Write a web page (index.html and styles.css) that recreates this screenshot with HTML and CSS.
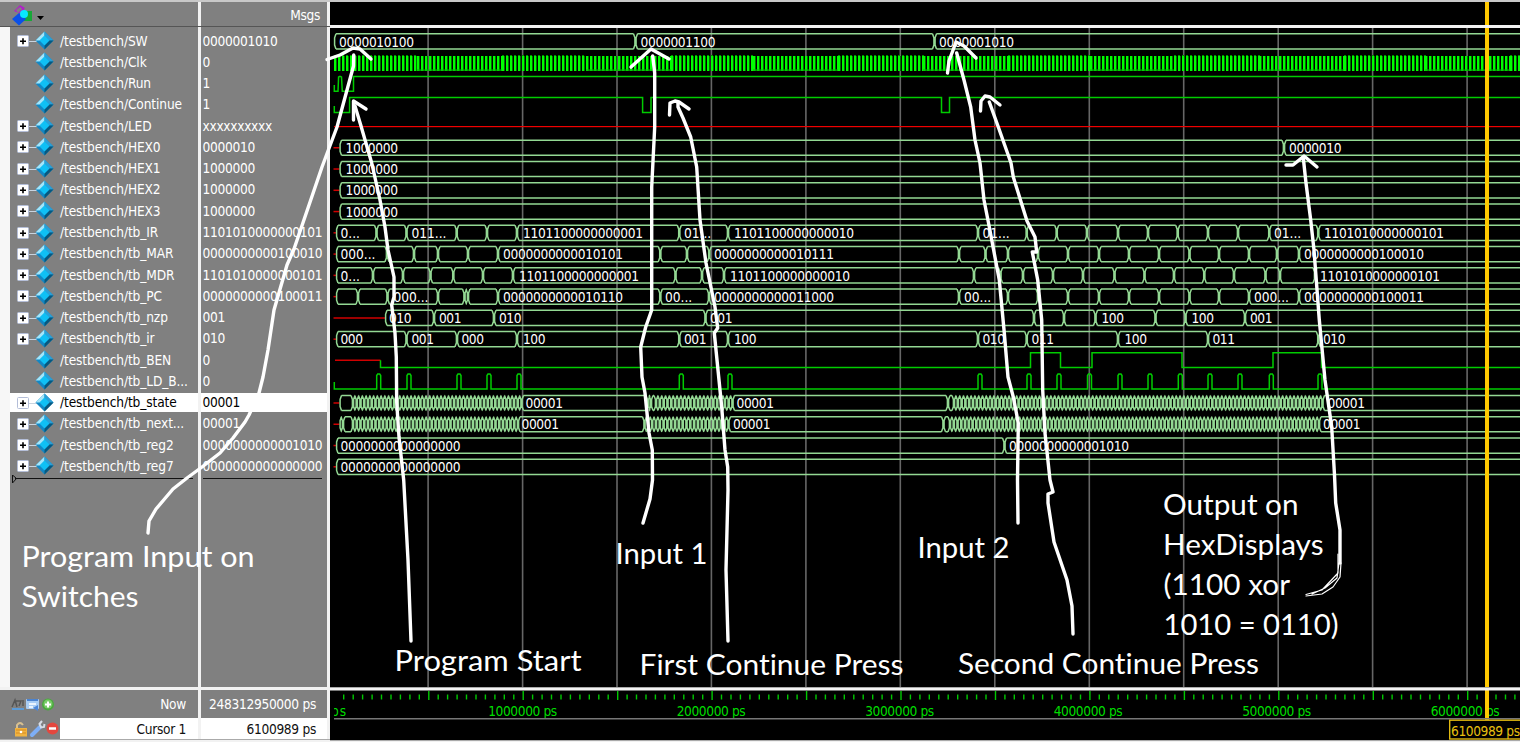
FILE: index.html
```html
<!DOCTYPE html>
<html lang="en">
<head>
<meta charset="utf-8">
<title>Wave</title>
<link rel="stylesheet" href="styles.css">
</head>
<body>
<div class="app">
  <aside class="panel">
    <div class="head">
      <div class="cell head-tools">
        <svg width="34" height="22" viewBox="0 0 34 22"><path d="M2 6 8 0 13 3 9 9Z" fill="#b020c8"/><path d="M4 5 8 2 10 4 6 8Z" fill="#808080"/><path d="M14 6H20V16H9V12H14Z" fill="#18a838"/><path d="M7 8 14 14 7 20.500 0 14Z" fill="#0a50e8"/><circle cx="12" cy="9" r="4" fill="#08e8ff"/><path d="M25 11H32L28.500 15Z" fill="#000"/></svg>
      </div>
      <div class="cell head-msgs">Msgs</div>
    </div>
    <div class="body">
      <div class="gutter"></div>
      <div class="names" id="names"></div>
      <div class="values" id="values"></div>
    </div>
    <div class="foot">
      <div class="cell now-name">
        <svg width="46" height="16" viewBox="0 0 46 16"><path d="M1 11 4 4 6 11M5 5H10L8 10M12 4V10" stroke="#555" stroke-width="1.500" fill="none"/><path d="M1 13H13" stroke="#5b9bd8" stroke-width="2"/><rect x="15" y="3" width="13" height="10" rx="1" fill="#a9cdf4"/><path d="M16 4H27" stroke="#4b83d0" stroke-width="2"/><path d="M18 8H25M18 11H22" stroke="#fff" stroke-width="1.500"/><path d="M22 12 27 9V15Z" fill="#4c86d8"/><circle cx="37" cy="8.500" r="6" fill="#4aa83e"/><circle cx="37" cy="8" r="4.500" fill="#79cc68"/><path d="M37 5.500V11.500M34 8.500H40" stroke="#fff" stroke-width="2"/></svg>
        <span>Now</span>
      </div>
      <div class="cell now-value">248312950000 ps</div>
      <div class="cell cur-name">
        <svg width="50" height="18" viewBox="0 0 50 18"><path d="M7 8V5Q10 1 13 5" fill="none" stroke="#d8c090" stroke-width="2"/><rect x="5" y="8" width="12" height="8.500" fill="#f1b340"/><path d="M6 10H16M6 13H16" stroke="#d88b20"/><circle cx="11" cy="12" r="1.300" fill="#fff"/><path d="M22 15 30 7" stroke="#7eaef5" stroke-width="4" stroke-linecap="round"/><path d="M32 1 29.500 4 31 7.500 34 7 34.500 4" stroke="#d7dde6" stroke-width="2" fill="none"/><circle cx="42.500" cy="8.500" r="6" fill="#e4473e"/><path d="M39 8.500H46" stroke="#fff" stroke-width="2.500"/></svg>
        <span>Cursor 1</span>
      </div>
      <div class="cell cur-value">6100989 ps</div>
    </div>
  </aside>
  <main class="wave"><svg id="wave" width="1190" height="742" viewBox="330 0 1190 742"></svg></main>
</div>
<svg class="notes" id="notes" width="1520" height="742" viewBox="0 0 1520 742"></svg>
<script src="wave.js"></script>
</body>
</html>
```
FILE: styles.css
```css
* { box-sizing: border-box; }
body {
  margin: 0;
  width: 1520px;
  height: 742px;
  overflow: hidden;
  position: relative;
  background: #f2f2f2;
  font-family: "DejaVu Sans Condensed", "DejaVu Sans", sans-serif;
  font-stretch: condensed;
  font-size: 13.600px;
}
.app { display: flex; height: 742px; }
.panel { width: 330px; flex: none; display: flex; flex-direction: column; color: #fff; }
.head, .foot { display: grid; grid-template-columns: 198px 126px; column-gap: 3px; }
.head { border-top: 2px solid #c8c8c8; height: 25px; }
.cell { background: #808080; }
.head-tools { padding: 3px 0 0 12px; }
.head-tools svg { display: block; }
.head-msgs { text-align: right; padding: 5px 7px 0 0; line-height: 16px; letter-spacing: -0.300px; }
.body {
  margin-top: 1px;
  height: 661px;
  display: grid;
  grid-template-columns: 10px 188px 126px;
  border-top: 1px solid #555;
}
.gutter { background: #f7f7f7; }
.names, .values { background: #808080; padding-top: 3px; overflow: hidden; }
.values { margin-left: 3px; width: 126px; }
.row { display: flex; align-items: center; height: 21.270px; white-space: nowrap; }
.row.sel { background: #fff; color: #000; margin: 1px 0; height: 19.270px; }
.row .icon { width: 50px; height: 19px; flex: none; }
.name { letter-spacing: -0.120px; }
.value { padding-left: 1.500px; letter-spacing: -0.290px; }
.end { height: 8px; display: block; margin-top: -2px; }
.foot { margin-top: 3px; grid-template-rows: 28px 21px; border-bottom: 1px solid #aaa; letter-spacing: -0.290px; }
.now-name, .cur-name { display: flex; align-items: center; justify-content: space-between; padding: 0 12px 0 11px; }
.now-value, .cur-value { text-align: right; line-height: 29px; padding-right: 11px; }
.cur-name { background: linear-gradient(90deg, #808080 60px, #fff 60px); color: #111; padding-left: 10px; }
.cur-value { background: #fff; color: #111; line-height: 23px; }
.wave { flex: none; width: 1190px; background: #000; }
.wave svg { display: block; }
.notes { position: absolute; left: 0; top: 0; }
.bus { fill: none; stroke: #93d893; stroke-width: 1.500; }
.bit { fill: none; stroke: #00cc00; stroke-width: 1.500; }
.unk { fill: none; stroke: #d00000; stroke-width: 1.500; }
.val { fill: #fff; }
.tick { fill: #00c800; }
.scale { fill: #00dd00; }
.pen { fill: none; stroke: #fff; stroke-width: 3.400; stroke-linejoin: round; stroke-linecap: round; }
.pen.thin { stroke-width: 1.200; }
.note { fill: #fff; font-family: Lato, sans-serif; font-size: 28.600px; font-variant-ligatures: none; }
.cursor-text { fill: #e8c010; }
```
FILE: wave.js
```js
const signals = [
  ['SW', '0000001010', 1], ['Clk', '0', 0], ['Run', '1', 0], ['Continue', '1', 0],
  ['LED', 'xxxxxxxxxx', 1], ['HEX0', '0000010', 1], ['HEX1', '1000000', 1], ['HEX2', '1000000', 1],
  ['HEX3', '1000000', 1], ['tb_IR', '1101010000000101', 1], ['tb_MAR', '0000000000100010', 1],
  ['tb_MDR', '1101010000000101', 1], ['tb_PC', '0000000000100011', 1], ['tb_nzp', '001', 1],
  ['tb_ir', '010', 1], ['tb_BEN', '0', 0], ['tb_LD_B...', '0', 0], ['tb_state', '00001', 1],
  ['tb_next...', '00001', 1], ['tb_reg2', '0000000000001010', 1], ['tb_reg7', '0000000000000000', 1]
];
const gem = '<path d="M34.500 .5 43.500 9.500 34.500 18.500 25.500 9.500Z" fill="#1287c4"/><path d="M34.500 .5 25.500 9.500H30L34.500 5Z" fill="#a5e6fa"/><path d="M34.500 .5 43.500 9.500H39L34.500 5Z" fill="#2b9fd6"/><path d="M34.500 18.500 43.500 9.500H39L34.500 14Z" fill="#07587f"/><path d="M34.500 4.500 39.500 9.500 34.500 14.500 29.500 9.500Z" fill="#0fc0f5"/>';
const plus = '<path d="M19 10.500H27" stroke="#c8d4e0"/><rect x="7.500" y="4.500" width="11" height="11" rx="1" fill="#fff" stroke="#b4bed8"/><path d="M10 10.200H16M13 7.200V13.200" stroke="#000" stroke-width="1.600"/>';
let names = '', values = '';
signals.forEach(([n, v, bus]) => {
  const sel = n === 'tb_state' ? ' sel' : '';
  names += `<div class="row${sel}"><svg class="icon" viewBox="0 0 50 19">${bus ? plus : ''}${gem}</svg><span class="name">/testbench/${n}</span></div>`;
  values += `<div class="row${sel}"><span class="value">${v}</span></div>`;
});
names += '<svg class="end" width="188" height="8"><path d="M2.500 0V8L6.500 3.500Z M5 3.500H183" fill="none" stroke="#111"/></svg>';
values += '<svg class="end" width="126" height="8"><path d="M2 3.500H121" stroke="#111"/></svg>';
document.getElementById('names').innerHTML = names;
document.getElementById('values').innerHTML = values;

let g = '';
const top_ = i => 33.8 + 21.27 * i;
const path = (cls, d) => `<path class="${cls}" d="${d}"/>`;

g += '<rect x="330" y="0" width="1190" height="2" fill="#c8c8c8"/>';
for (let k = 0; k < 12; k++) {
  const x = 428 + k * 94.45;
  g += `<rect x="${(x - 0.7).toFixed(1)}" y="27" width="1.6" height="660" fill="#666"/>`;
}

function bus(i, start, edges, labels, red) {
  const t = top_(i), b = t + 15.2, m = t + 7.6;
  let d = '', x = start;
  const half = (e, s) => `M${e + s * 2} ${t}L${e + s * .6} ${t + 4}V${b - 4}L${e + s * 2} ${b}`;
  d += half(start, 1);
  for (const e of edges) {
    d += `M${x + 2} ${t}H${e - 2}M${x + 2} ${b}H${e - 2}` + half(e, -1) + half(e, 1);
    x = e;
  }
  d += `M${x + 2} ${t}H1520M${x + 2} ${b}H1520`;
  if (red) g += path('unk', `M333.5 ${m}H${start}`);
  g += path('bus', d);
  for (const [lx, s] of labels) {
    const len = s.includes('.') ? '' : ` textLength="${s.length * 7.5}"`;
    g += `<text class="val" x="${lx - .5}" y="${t + 12.8}"${len}>${s}</text>`;
  }
}
function range(a, b) {
  const n = Math.round((b - a) / 3.78), r = [];
  for (let k = 0; k <= n; k++) r.push(a + (b - a) * k / n);
  return r;
}

bus(0, 334, [635.5, 934.5], [[339.5, '0000010100'], [641, '0000001100'], [939.5, '0000001010']]);

const beats = [334, 417, 502, 586, 671, 753, 838, 923, 1008, 1090, 1174, 1259, 1344, 1425, 1510, 1520];
for (let k = 0; k < beats.length - 1; k++) {
  const a = beats[k], e = beats[k + 1];
  for (let x = a; x < e; x += 4) {
    g += `<rect x="${x}" y="56" width="2" height="15" fill="#00ff00"/><rect x="${x + 2}" y="56" width="1" height="15" fill="#007000"/>`;
    if (k % 2 === 0) g += `<rect x="${x}" y="55" width="2" height="1" fill="#009000"/>`;
  }
  if (k % 2) g += `<rect x="${a}" y="69.500" width="${e - a}" height="1.200" fill="#00c000"/>`;
}

g += path('bit', 'M334.300 85V91.300H338L338.600 77 340 76.300 341.500 77 342.300 91.300H353.500V76.600H1520');
g += path('bit', 'M334.300 106V112.500H349.600V97.500H642.600V112.500H651V97.500H941.500V112.500H949.500V97.500H1520');
g += '<rect x="334" y="126" width="1186" height="1.200" fill="#f00000"/>';

bus(5, 339.5, [1284], [[346, '1000000'], [1289.5, '0000010']], 1);
for (const i of [6, 7, 8]) bus(i, 339.5, [], [[346, '1000000']], 1);
bus(9, 336, [376.5, 406.5, 456.7, 487, 517, 679.3, 728, 978, 1026.7, 1056.7, 1087, 1118, 1148, 1177.7, 1208, 1238, 1269.3, 1318.3],
  [[341, '0...'], [412, '011...'], [523.5, '1101100000000001'], [684.5, '01...'], [734.5, '1101100000000010'], [983, '01...'], [1274.5, '01...'], [1324.5, '1101010000000101']], 1);
bus(10, 336, [387, 414, 438, 468, 498, 660.3, 687, 709.3, 959, 985.5, 1008, 1038, 1068, 1099, 1129, 1159, 1189.5, 1219, 1249, 1277, 1299],
  [[341, '000...'], [503.5, '0000000000010101'], [714.5, '0000000000010111'], [1304.5, '0000000000100010']], 1);
bus(11, 336, [373, 403, 430.5, 453.3, 483, 513, 675.5, 702, 724, 974, 1000.5, 1023, 1053, 1083, 1114.5, 1144.5, 1174, 1204.3, 1234, 1265.5, 1280, 1315],
  [[341, '0...'], [519.5, '1101100000000001'], [730.5, '1101100000000010'], [1320.5, '1101010000000101']], 1);
bus(12, 336, [358, 387.5, 438, 464.5, 468, 498, 660.3, 709, 959, 1008, 1038, 1068, 1099, 1129, 1159, 1189.5, 1219, 1249, 1299],
  [[394, '000...'], [503.5, '0000000000010110'], [665.5, '00...'], [714.5, '0000000000011000'], [964.5, '00...'], [1254.5, '000...'], [1304.5, '0000000000100011']], 1);
bus(13, 385, [434, 494, 705.5, 1034, 1064, 1095.5, 1155.5, 1185.5, 1245],
  [[389.5, '010'], [439.5, '001'], [499.5, '010'], [710.5, '001'], [1102, '100'], [1192, '100'], [1250.5, '001']], 1);
bus(14, 336, [406.5, 457, 517, 679.3, 728, 978, 1026.7, 1118, 1208, 1318.3],
  [[341, '000'], [412, '001'], [462, '000'], [523.5, '100'], [684.5, '001'], [734.5, '100'], [983, '010'], [1032, '011'], [1125, '100'], [1213, '011'], [1323.5, '010']], 1);

g += path('unk', 'M335 360.300H380.500');
g += path('bit', 'M380.500 360.300V367.500H1030.500V352.700H1060.500V367.500H1092V352.700H1182V367.500H1273V352.700H1321.500V367.500H1520');
let ld = 'M334.300 382V389';
for (const x of [376.7, 407, 457, 487, 517, 679.3, 728, 978, 1027, 1057, 1087.5, 1118, 1148, 1178.3, 1208, 1238, 1269.3, 1318])
  ld += `H${x}V375.500L${x + 1} 374H${x + 3}L${x + 4} 375.500V389`;
g += path('bit', ld + 'H1520');

bus(17, 339.5, [...range(353, 521.5), 648, 651, ...range(656, 732.5), 948, ...range(954, 1322.5)],
  [[526, '00001'], [737, '00001'], [1328, '00001']], 1);
bus(18, 339.5, [343, ...range(353, 518), ...range(644.5, 728.5), 943.5, ...range(950, 1319)],
  [[522, '00001'], [733.5, '00001'], [1323.5, '00001']], 1);
bus(19, 336, [1004.5], [[341, '0000000000000000'], [1009.5, '0000000000001010']], 1);
bus(20, 336, [], [[341, '0000000000000000']], 1);

g += '<rect x="1485" y="2" width="4" height="718" fill="#ffc800"/>';
g += '<rect x="330" y="25" width="1190" height="3" fill="#f2f2f2"/><rect x="330" y="687" width="1190" height="3.500" fill="#f2f2f2"/>';
g += '<rect x="330" y="687" width="1190" height="1" fill="#aaa"/>';
for (let k = 1; k < 126; k++) {
  const major = k % 10 === 0;
  g += `<rect class="tick" x="${(333.6 + k * 9.445).toFixed(1)}" y="${major ? 691 : 694.5}" width="1.4" height="${major ? 9 : 5}"/>`;
}
g += '<svg x="334" y="700" width="20" height="20" viewBox="334 700 20 20"><text class="scale" x="331" y="716" textLength="15">ps</text></svg>';
for (let n = 1; n <= 6; n++)
  g += `<text class="scale" x="${488.2 + (n - 1) * 188.5}" y="716" textLength="69">${n}000000 ps</text>`;
g += '<rect x="1485" y="691" width="4" height="28" fill="#ffc800"/>';
g += '<rect x="334" y="718" width="1186" height="1.500" fill="#777"/>';
g += '<rect x="1449.700" y="720.200" width="75" height="18.800" fill="#000" stroke="#e0b810" stroke-width="1.400"/>';
g += '<text class="cursor-text" x="1451" y="735.500" textLength="69">6100989 ps</text>';
g += '<rect x="330" y="740" width="1190" height="1" fill="#aaa"/><rect x="330" y="741" width="1190" height="1" fill="#f2f2f2"/>';
document.getElementById('wave').innerHTML = g;

const strokes = [
  '353.700,55 353.500,66 337,127 322,167 294,249 287,265 274,310 268,350 263,377 259,393 249,415 245,422 233,438 220,453 202,467 187,478 173,489 156,509 149,521 148,533',
  '327,59.500 340,55 353,48 360,49 371,59',
  '355,106 361,126 371.700,163 380,200 385,227 388,250 394,277 394,297 391.700,305 395,333 396.300,357 396.700,402 399,437 403.700,480 408,560 411,641',
  '353.500,120 353.500,101 366,109',
  '643,523 650,499 652.500,480 652.300,450 649,433 645,393 642,377 640.700,347 645.700,327 651.700,310 651.700,187 654.700,127 654.700,73 652.700,56',
  '631,67 651,49 669,59',
  '728,641 726,570 728,490 727.700,467 725,450 721.700,407 714.300,333 717.700,328 715,307 706,263 700,220 696.700,167 690.700,137 683,118 678,107 678,103',
  '669.500,115 670,103 675,101 679,102 689,109',
  '1018,523 1017.500,480 1018.300,423 1013.300,397 1008,377 1004.300,333 999.300,280 989.300,227 984,200 980,163 975,140 970.700,107 964,80 956.700,53',
  '947.500,73 949,61 956,42 964,46 976,58',
  '1073,634 1072,606 1067,580 1054,542 1048,503 1048,494 1053,492 1050,480 1045,433 1042.700,390 1041.700,320 1037.700,280 1032.300,252 1036.700,252 1035,237 1027,221 1013.300,177 1011,163 998.300,127 989.300,102',
  '980.500,111 981,101 985,96 990,97 1000,105',
  '1303.300,158 1306,183 1310.700,220 1314,250 1319.300,320 1325,380 1331.700,427 1334.500,475 1335.700,503 1340,530 1340,563',
  '1286,165 1293,165 1304,156 1317,167'
];
const notes = [
  [21.5, 566.5, 233, 'Program Input on'], [21.5, 606.5, 117, 'Switches'],
  [394.5, 670.5, 187, 'Program Start'], [615.5, 563.5, 92, 'Input 1'],
  [639.5, 674.5, 264, 'First Continue Press'], [917.5, 557.5, 92, 'Input 2'],
  [958, 673.5, 301, 'Second Continue Press'], [1163, 514.5, 135.5, 'Output on'],
  [1163, 554.5, 160.5, 'HexDisplays'], [1163.5, 594.5, 126.5, '(1100 xor'],
  [1163.5, 634.5, 175, '1010 = 0110)']
];
let a = strokes.map(p => `<polyline class="pen" points="${p}"/>`).join('');
a += '<path class="pen thin" d="M1341 563 1340 577 1333 587 1322 594 1306 596M1338 554 1338 573 1322 590 1306 594.500M1339 563 1337 578 1325 588 1312 594"/>';
a += notes.map(([x, y, w, s]) => `<text class="note" x="${x}" y="${y}" textLength="${w}" lengthAdjust="spacingAndGlyphs">${s}</text>`).join('');
document.getElementById('notes').innerHTML = a;
```
